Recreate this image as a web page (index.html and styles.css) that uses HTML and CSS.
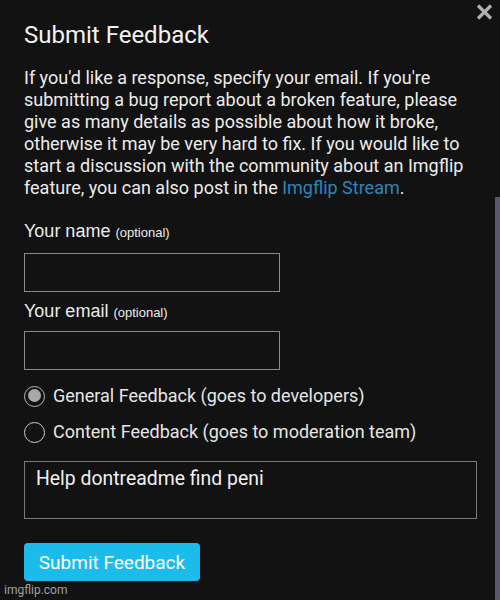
FILE: index.html
```html
<!DOCTYPE html>
<html>
<head>
<meta charset="utf-8">
<link rel="stylesheet" href="styles.css">
</head>
<body>
<div class="modal">
  <button class="close" aria-label="Close">
    <svg width="17" height="16" viewBox="0 0 17 16"><path d="M2 1.5 L15 14.5 M15 1.5 L2 14.5" stroke="#b0b0b0" stroke-width="3.2" stroke-linecap="butt"/></svg>
  </button>
  <h1 class="title">Submit Feedback</h1>
  <p class="intro">If you'd like a response, specify your email. If you're submitting a bug report about a broken feature, please give as many details as possible about how it broke, otherwise it may be very hard to fix. If you would like to start a discussion with the community about an Imgflip feature, you can also post in the <a class="link" href="#">Imgflip Stream</a>.</p>
  <div class="field">
    <div class="label">Your name <span class="opt">(optional)</span></div>
    <div class="input"></div>
  </div>
  <div class="field">
    <div class="label">Your email <span class="opt">(optional)</span></div>
    <div class="input"></div>
  </div>
  <div class="radios">
    <div class="radio-row"><span class="radio checked"></span><span>General Feedback (goes to developers)</span></div>
    <div class="radio-row"><span class="radio"></span><span>Content Feedback (goes to moderation team)</span></div>
  </div>
  <div class="textarea">Help dontreadme find peni</div>
  <button class="submit">Submit Feedback</button>
</div>
<div class="scroll-edge"></div>
<div class="watermark">imgflip.com</div>
</body>
</html>
```
FILE: styles.css
```css
html, body {
  margin: 0;
  padding: 0;
  background: #121212;
}
body {
  width: 500px;
  height: 600px;
  overflow: hidden;
  position: relative;
  font-family: Roboto, "Noto Sans", sans-serif;
  color: #ececec;
}
.modal {
  width: 495px;
  box-sizing: border-box;
  padding: 20px 24px 0 24px;
  position: relative;
}
.close {
  position: absolute;
  top: 4px;
  right: 2px;
  background: none;
  border: 0;
  padding: 0;
  width: 17px;
  height: 16px;
  display: block;
}
.close svg {
  display: block;
}
.title {
  margin: 0;
  font-size: 24px;
  font-weight: 400;
  line-height: 30px;
  color: #f2f2f2;
}
.intro {
  margin: 17px 0 0 0;
  font-size: 18px;
  line-height: 22px;
  color: #ececec;
  width: 452px;
}
.link {
  color: #2a86bd;
  text-decoration: none;
}
.field {
  margin-top: 21px;
}
.field + .field {
  margin-top: 8px;
}
.label {
  font-size: 18px;
  line-height: 22px;
  font-family: "Liberation Sans", Arial, sans-serif;
  color: #ececec;
}
.opt {
  font-size: 13px;
}
.input {
  margin-top: 9px;
  width: 256px;
  height: 39px;
  box-sizing: border-box;
  border: 1px solid #8a8a8a;
  background: #121212;
}
.field + .field .input {
  margin-top: 7px;
}
.radios {
  margin-top: 15px;
  display: flex;
  flex-direction: column;
  gap: 14px;
}
.radio-row {
  display: flex;
  align-items: center;
  gap: 8px;
  font-size: 18px;
  line-height: 22px;
  color: #e6e6e6;
}
.radio {
  width: 21px;
  height: 21px;
  box-sizing: border-box;
  border: 1.5px solid #d0d0d0;
  border-radius: 50%;
  background: #121212;
  position: relative;
  flex: none;
}
.radio.checked {
  border-color: #b8b8b8;
}
.radio.checked::after {
  content: "";
  position: absolute;
  left: 2.5px;
  top: 2.5px;
  width: 13px;
  height: 13px;
  border-radius: 50%;
  background: #a8a8a8;
}
.textarea {
  margin-top: 18px;
  width: 453px;
  height: 58px;
  box-sizing: border-box;
  border: 1px solid #7a7a7a;
  padding: 6px 11px;
  font-size: 19.4px;
  line-height: 22px;
  color: #f0f0f0;
}
.submit {
  display: block;
  margin-top: 24px;
  background: #1bbcec;
  color: #ffffff;
  border: 0;
  border-radius: 4px;
  height: 38px;
  width: 176px;
  padding: 0;
  font-family: Roboto, "Noto Sans", sans-serif;
  font-size: 19px;
}
.scroll-edge {
  position: absolute;
  right: 0;
  top: 197px;
  width: 5px;
  bottom: 0;
  background: #5a5770;
}
.watermark {
  position: absolute;
  left: 4px;
  bottom: 3px;
  font-family: Roboto, "Noto Sans", sans-serif;
  font-size: 12px;
  color: #a0a0a0;
}
```
